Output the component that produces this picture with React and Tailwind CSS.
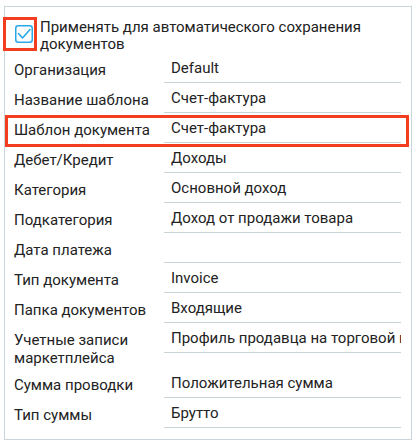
import React from "react";

const rows = [
  ["Организация", "Default"],
  ["Название шаблона", "Счет-фактура"],
  ["Шаблон документа", "Счет-фактура", true],
  ["Дебет/Кредит", "Доходы"],
  ["Категория", "Основной доход"],
  ["Подкатегория", "Доход от продажи товара"],
  ["Дата платежа", ""],
  ["Тип документа", "Invoice"],
  ["Папка документов", "Входящие"],
  ["Учетные записи маркетплейса", "Профиль продавца на торговой площадке"],
  ["Сумма проводки", "Положительная сумма"],
  ["Тип суммы", "Брутто"],
];

export default function App() {
  return (
    <div className="w-[416px] h-[444px] bg-white text-[#222] text-[15px] font-['Roboto',sans-serif] pt-[6px] pl-[4px]">
      <div className="relative w-[408px] border border-[#c9d7dd] pt-[12px] pb-[11px] pl-[9px]">
        <div className="flex items-start">
          <div className="relative shrink-0 w-[26px] pt-[6px] pl-[1px]">
            <svg width="18" height="18" viewBox="0 0 18 18" className="block">
              <rect x="0.75" y="0.75" width="16.5" height="16.5" rx="2.5" fill="white" stroke="#2aa7e8" strokeWidth="1.5" />
              <path d="M3.5 8.5 L7.5 13 L15 4.5" fill="none" stroke="#2aa7e8" strokeWidth="1.6" strokeLinecap="round" strokeLinejoin="round" />
            </svg>
            <div className="absolute left-[-11px] top-[-2px] w-[34px] h-[34px] border-[3px] border-[#f23d1f]" />
          </div>
          <div className="leading-[17px] pr-[20px]">
            Применять для автоматического сохранения документов
          </div>
        </div>
        <div className="grid grid-cols-[150px_237px]">
          {rows.map(([label, value, hl], i) => (
            <React.Fragment key={i}>
              <div className="pt-[8px] pb-[1px] leading-[18px] pr-[6px]">{label}</div>
              <div className="h-[30px] border-b border-[#c9d4d9] pt-[6px] pl-[7px] leading-[18px] whitespace-nowrap overflow-hidden">
                {value}
              </div>
            </React.Fragment>
          ))}
        </div>
        <div className="absolute left-[0px] top-[108px] w-[404px] h-[32px] border-[3px] border-[#f23d1f] pointer-events-none" />
      </div>
    </div>
  );
}
